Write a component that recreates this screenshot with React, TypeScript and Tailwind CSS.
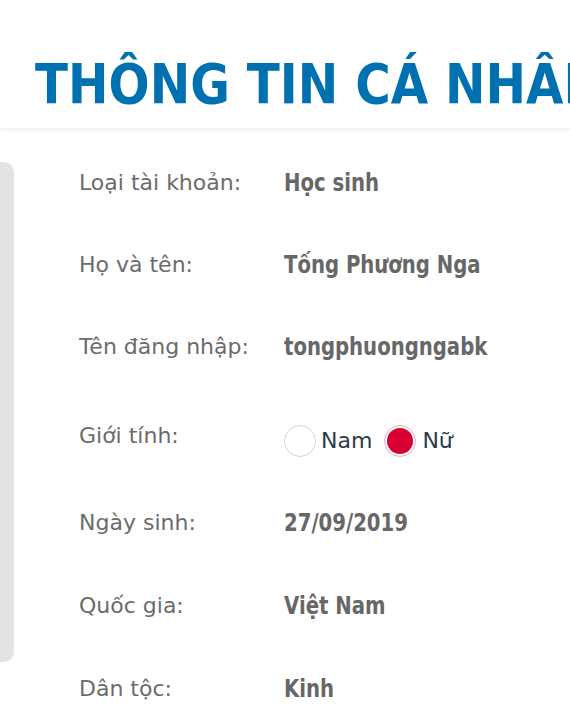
import React from "react";

const rows: { label: string; value: string }[] = [
  { label: "Loại tài khoản:", value: "Học sinh" },
  { label: "Họ và tên:", value: "Tống Phương Nga" },
  { label: "Tên đăng nhập:", value: "tongphuongngabk" },
];
const rows2: { label: string; value: string }[] = [
  { label: "Ngày sinh:", value: "27/09/2019" },
  { label: "Quốc gia:", value: "Việt Nam" },
  { label: "Dân tộc:", value: "Kinh" },
];

function Row({ label, value, h }: { label: string; value: string; h: string }) {
  return (
    <div className={`flex items-start ${h}`}>
      <div className="w-[205px] shrink-0 text-[22px] leading-[30px] text-[#6b6b6b]">{label}</div>
      <div className="whitespace-nowrap origin-left scale-x-[0.82] text-[24px] leading-[30px] font-bold text-[#676767]">{value}</div>
    </div>
  );
}

export default function App() {
  return (
    <div className="w-[570px] h-[715px] overflow-hidden bg-white" style={{ fontFamily: '"DejaVu Sans", Verdana, sans-serif' }}>
      <div className="relative h-[128px] bg-white shadow-[0_2px_4px_rgba(0,0,0,0.07)] pt-[52px] pl-[35px]">
        <div className="whitespace-nowrap origin-left scale-x-[0.88] text-[55px] leading-[64px] font-bold text-[#0071b0]">
          THÔNG TIN CÁ NHÂN
        </div>
      </div>
      <div className="flex pt-[34px]">
        <div className="w-[14px] h-[500px] shrink-0 rounded-r-[10px] bg-[#e3e3e3]" />
        <div className="pl-[65px] pt-[6px] flex flex-col">
          {rows.map((r) => (
            <Row key={r.label} label={r.label} value={r.value} h="h-[82px]" />
          ))}
          <div className="flex items-start h-[94px]">
            <div className="w-[205px] shrink-0 pt-[7px] text-[22px] leading-[30px] text-[#6b6b6b]">Giới tính:</div>
            <div className="flex items-center pt-[11px] text-[22px] leading-[32px] text-[#2d3a4a]">
              <div className="w-[32px] h-[32px] rounded-full border border-[#cdd6e0] bg-white" />
              <span className="ml-[5px]">Nam</span>
              <div className="ml-[12px] w-[32px] h-[32px] rounded-full border border-[#e0b5c0] p-[2px]">
                <div className="w-full h-full rounded-full bg-[#d80032]" />
              </div>
              <span className="ml-[6px]">Nữ</span>
            </div>
          </div>
          {rows2.map((r) => (
            <Row key={r.label} label={r.label} value={r.value} h="h-[83px]" />
          ))}
        </div>
      </div>
    </div>
  );
}
